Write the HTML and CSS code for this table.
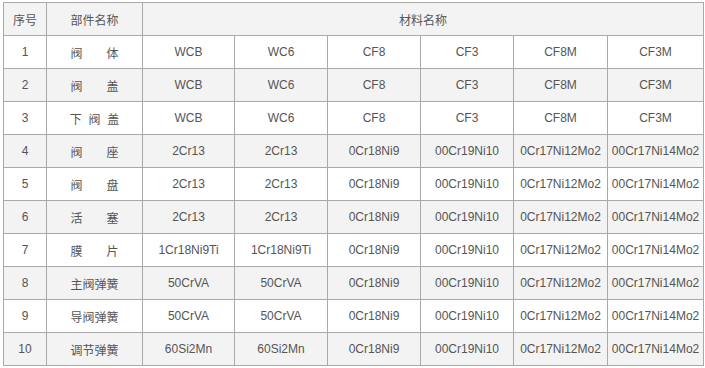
FILE: index.html
```html
<!DOCTYPE html>
<html lang="zh-CN">
<head>
  <meta charset="UTF-8" />
  <title>阀门材料表</title>
  <link rel="stylesheet" href="styles.css">
</head>
<body>
  <table class="mat-table">
    <colgroup>
      <col class="c-no" />
      <col class="c-part" />
      <col class="c-m1" />
      <col class="c-m2" />
      <col class="c-m3" />
      <col class="c-m4" />
      <col class="c-m5" />
      <col class="c-m6" />
    </colgroup>
    <tr class="head">
      <td>序号</td>
      <td>部件名称</td>
      <td colspan="6">材料名称</td>
    </tr>
    <tr>
      <td>1</td><td>阀&emsp;&emsp;体</td>
      <td>WCB</td><td>WC6</td><td>CF8</td><td>CF3</td><td>CF8M</td><td>CF3M</td>
    </tr>
    <tr>
      <td>2</td><td>阀&emsp;&emsp;盖</td>
      <td>WCB</td><td>WC6</td><td>CF8</td><td>CF3</td><td>CF8M</td><td>CF3M</td>
    </tr>
    <tr>
      <td>3</td><td>下&nbsp;&nbsp;阀&nbsp;&nbsp;盖</td>
      <td>WCB</td><td>WC6</td><td>CF8</td><td>CF3</td><td>CF8M</td><td>CF3M</td>
    </tr>
    <tr>
      <td>4</td><td>阀&emsp;&emsp;座</td>
      <td>2Cr13</td><td>2Cr13</td><td>0Cr18Ni9</td><td>00Cr19Ni10</td><td>0Cr17Ni12Mo2</td><td>00Cr17Ni14Mo2</td>
    </tr>
    <tr>
      <td>5</td><td>阀&emsp;&emsp;盘</td>
      <td>2Cr13</td><td>2Cr13</td><td>0Cr18Ni9</td><td>00Cr19Ni10</td><td>0Cr17Ni12Mo2</td><td>00Cr17Ni14Mo2</td>
    </tr>
    <tr>
      <td>6</td><td>活&emsp;&emsp;塞</td>
      <td>2Cr13</td><td>2Cr13</td><td>0Cr18Ni9</td><td>00Cr19Ni10</td><td>0Cr17Ni12Mo2</td><td>00Cr17Ni14Mo2</td>
    </tr>
    <tr>
      <td>7</td><td>膜&emsp;&emsp;片</td>
      <td>1Cr18Ni9Ti</td><td>1Cr18Ni9Ti</td><td>0Cr18Ni9</td><td>00Cr19Ni10</td><td>0Cr17Ni12Mo2</td><td>00Cr17Ni14Mo2</td>
    </tr>
    <tr>
      <td>8</td><td>主阀弹簧</td>
      <td>50CrVA</td><td>50CrVA</td><td>0Cr18Ni9</td><td>00Cr19Ni10</td><td>0Cr17Ni12Mo2</td><td>00Cr17Ni14Mo2</td>
    </tr>
    <tr>
      <td>9</td><td>导阀弹簧</td>
      <td>50CrVA</td><td>50CrVA</td><td>0Cr18Ni9</td><td>00Cr19Ni10</td><td>0Cr17Ni12Mo2</td><td>00Cr17Ni14Mo2</td>
    </tr>
    <tr>
      <td>10</td><td>调节弹簧</td>
      <td>60Si2Mn</td><td>60Si2Mn</td><td>0Cr18Ni9</td><td>00Cr19Ni10</td><td>0Cr17Ni12Mo2</td><td>00Cr17Ni14Mo2</td>
    </tr>
  </table>
</body>
</html>
```

FILE: styles.css
```css
:root {
  --line:    #a9a9a9;
  --stripe:  #f3f3f3;
  --text:    #555;
}

body {
  margin: 2px 0 0 3px;
  font-family: "Liberation Sans", "Noto Sans CJK SC", sans-serif;
  font-size: 12px;
  color: var(--text);
  background: #fff;
}

.mat-table {
  width: 700px;
  table-layout: fixed;
  border-collapse: collapse;
}

.mat-table td {
  height: 32px;
  padding: 0;
  border: 1px solid var(--line);
  text-align: center;
  vertical-align: middle;
  white-space: nowrap;
}

.mat-table tr:nth-child(odd) { background: var(--stripe); }
.mat-table tr.head { background: var(--stripe); }

.c-no   { width: 43px; }
.c-part { width: 96px; }
.c-m1   { width: 92px; }
.c-m2   { width: 93px; }
.c-m3   { width: 93px; }
.c-m4   { width: 93px; }
.c-m5   { width: 94px; }
.c-m6   { width: 96px; }
```
